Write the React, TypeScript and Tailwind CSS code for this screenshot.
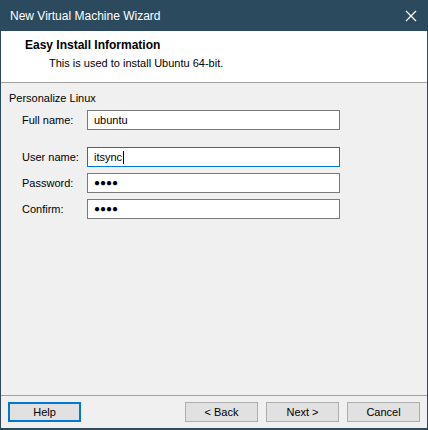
import React from "react";

const font = { fontFamily: '"Liberation Sans", Arial, sans-serif' };

function Btn({ children, focused }: { children: React.ReactNode; focused?: boolean }) {
  return (
    <div
      className={
        "w-[73px] h-[20px] flex items-center justify-center text-[11px] text-black bg-[#e1e1e1] " +
        (focused ? "border-2 border-[#0078d7]" : "border border-[#adadad]")
      }
    >
      {children}
    </div>
  );
}

function Field({ label, value, focused, password }: { label: string; value: string; focused?: boolean; password?: boolean }) {
  return (
    <div className="flex items-center h-[20px]">
      <div className="w-[65px] text-[11px] text-black">{label}</div>
      <div
        className={
          "w-[253px] h-[20px] flex items-center pl-[6px] text-[11px] text-black " +
          (focused ? "bg-white border border-[#0078d7]" : "bg-white border border-[#7a7a7a]")
        }
      >
        {password ? (
          <span className="text-[10px] tracking-[0px] leading-none">●●●●</span>
        ) : (
          <span>{value}</span>
        )}
        {focused && <span className="w-px h-[13px] bg-black ml-px" />}
      </div>
    </div>
  );
}

export default function App() {
  return (
    <div style={font} className="w-[428px] h-[430px] bg-[#2b4a5d] flex flex-col px-px pb-[2px]">
      <div className="h-[31px] flex items-center justify-between pl-[9px] pr-[6px]">
        <span className="text-white text-[12px]">New Virtual Machine Wizard</span>
        <svg width="12" height="12" viewBox="0 0 12 12" className="mr-[4px]">
          <path d="M1 1 L11 11 M11 1 L1 11" stroke="white" strokeWidth="1.3" />
        </svg>
      </div>
      <div className="h-[52px] bg-white border-b border-[#a0a0a0] pl-[24px] pt-[7px] flex flex-col">
        <div className="text-[12px] font-bold text-black leading-[15px]">Easy Install Information</div>
        <div className="text-[11px] text-black pl-[24px] leading-[15px] mt-[3px]">This is used to install Ubuntu 64-bit.</div>
      </div>
      <div className="flex-1 bg-[#f0f0f0] flex flex-col">
        <div className="flex-1 flex flex-col pl-[8px] pt-[8px]">
          <div className="text-[11px] text-black leading-[14px]">Personalize Linux</div>
          <div className="pl-[13px] mt-[5px] flex flex-col">
            <Field label="Full name:" value="ubuntu" />
            <div className="h-[17px]" />
            <Field label="User name:" value="itsync" focused />
            <div className="h-[6px]" />
            <Field label="Password:" value="" password />
            <div className="h-[6px]" />
            <Field label="Confirm:" value="" password />
          </div>
        </div>
        <div className="border-t border-[#a0a0a0] h-[33px] flex items-start pt-[6px] pl-[7px]">
          <Btn focused>Help</Btn>
          <div className="w-[104px]" />
          <Btn>&lt; Back</Btn>
          <div className="w-[8px]" />
          <Btn>Next &gt;</Btn>
          <div className="w-[8px]" />
          <Btn>Cancel</Btn>
        </div>
      </div>
    </div>
  );
}
